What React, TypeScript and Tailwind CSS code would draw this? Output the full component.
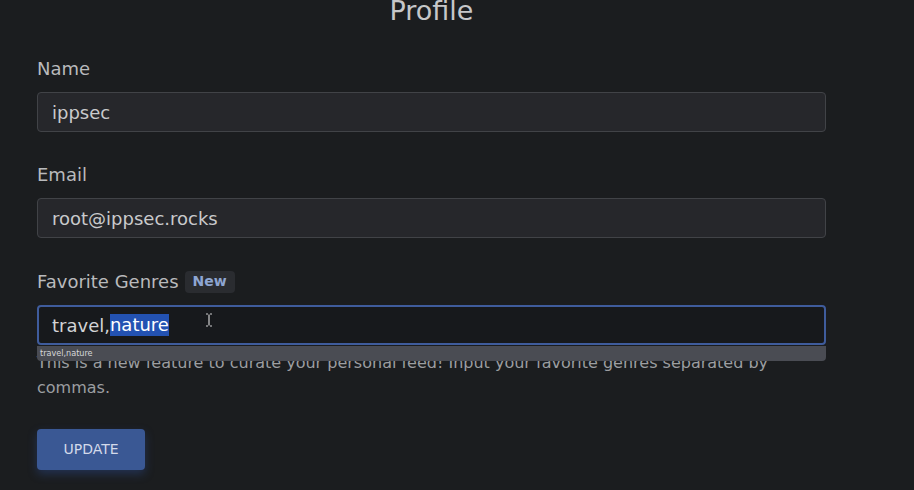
import React from "react";

const font = { fontFamily: '"DejaVu Sans", Verdana, sans-serif' };

export default function App() {
  return (
    <div
      className="h-[490px] w-[914px] overflow-hidden bg-[#1b1d1f] text-[#c4c5c7]"
      style={font}
    >
      <div className="ml-[37px] w-[789px] flex flex-col">
        <h1 className="-mt-[3px] text-center text-[27px] leading-[27px] text-[#c6c7c9]">
          Profile
        </h1>

        {/* Name */}
        <div className="mt-[31px] flex flex-col">
          <label className="text-[18px] leading-[27px] text-[#b9babc]">Name</label>
          <div className="mt-[10px] h-[40px] rounded-[4px] border border-[#414347] bg-[#26272b] pl-[14px] flex items-center text-[18px] text-[#c9cacc]">
            ippsec
          </div>
        </div>

        {/* Email */}
        <div className="mt-[29px] flex flex-col">
          <label className="text-[18px] leading-[27px] text-[#b9babc]">Email</label>
          <div className="mt-[10px] h-[40px] rounded-[4px] border border-[#414347] bg-[#26272b] pl-[14px] flex items-center text-[18px] text-[#c9cacc]">
            root@ippsec.rocks
          </div>
        </div>

        {/* Favorite genres */}
        <div className="mt-[30px] flex flex-col">
          <div className="flex items-center h-[27px]">
            <label className="text-[18px] leading-[27px] text-[#b9babc]">Favorite Genres</label>
            <span className="ml-[6px] h-[22px] rounded-[4px] bg-[#2a2c30] px-[8px] flex items-center text-[14px] font-bold text-[#8ea6d2]">
              New
            </span>
          </div>
          <div className="relative mt-[10px]">
            <div className="h-[40px] rounded-[4px] border-2 border-[#3f5c9c] bg-[#17191c] pl-[13px] flex items-center text-[18px] text-[#d2d3d5]">
              <span>travel,</span>
              <span className="bg-[#2352b2] text-white leading-[22px]">nature</span>
            </div>
            <svg
              className="absolute left-[168px] top-[8px]"
              width="8"
              height="14"
              viewBox="0 0 8 14"
            >
              <path
                d="M1 1 H3 M5 1 H7 M4 1.5 V12.5 M1 13 H3 M5 13 H7"
                stroke="#d0d0d0"
                strokeWidth="1.2"
                fill="none"
              />
            </svg>
            <div
              className="absolute left-0 top-[41px] z-10 h-[15px] w-[789px] rounded-b-[4px] bg-[#4a4c53] pl-[3px] flex items-center text-[9px] text-[#d6d7d9]"
              style={{ fontFamily: '"DejaVu Sans Condensed", "DejaVu Sans", sans-serif', fontStretch: "condensed" }}
            >
              travel,nature
            </div>
          </div>
          <p className="mt-[4.5px] text-[16px] leading-[25.6px] text-[#9c9ea1]">
            This is a new feature to curate your personal feed! Input your favorite genres separated by commas.
          </p>
        </div>

        <div className="mt-[28.5px]">
          <button className="h-[41px] w-[108px] rounded-[4px] bg-[#3a5894] text-[14px] text-[#d3daea] shadow-[0_4px_10px_rgba(45,75,145,0.45)]">
            UPDATE
          </button>
        </div>
      </div>
    </div>
  );
}
